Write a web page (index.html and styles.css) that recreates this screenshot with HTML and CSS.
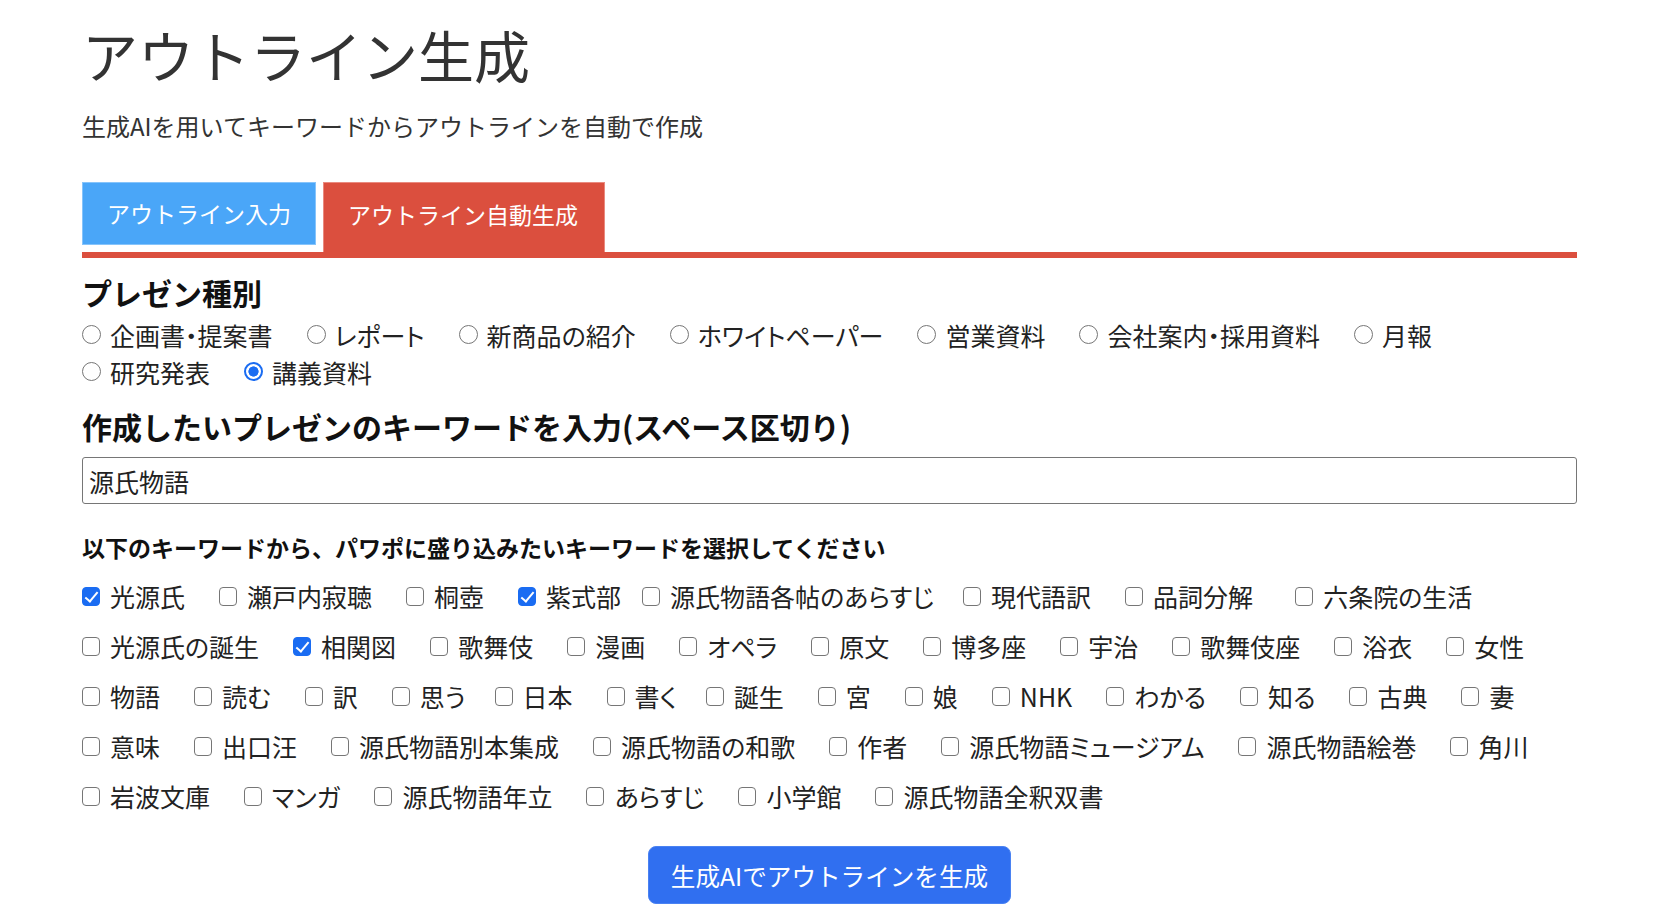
FILE: index.html
```html
<!DOCTYPE html>
<html lang="ja">
<head>
<meta charset="utf-8">
<title>アウトライン生成</title>
<link rel="stylesheet" href="styles.css">
</head>
<body>
<div class="page">
  <h1 class="title">アウトライン生成</h1>
  <p class="lead">生成AIを用いてキーワードからアウトラインを自動で作成</p>

  <div class="tabs">
    <button class="tab tab-input">アウトライン入力</button>
    <button class="tab tab-auto">アウトライン自動生成</button>
  </div>

  <section class="panel">
    <h2 class="sec-title">プレゼン種別</h2>
    <div class="radios">
      <label class="opt"><input type="radio" name="kind">企画書・提案書</label>
      <label class="opt"><input type="radio" name="kind">レポート</label>
      <label class="opt"><input type="radio" name="kind">新商品の紹介</label>
      <label class="opt"><input type="radio" name="kind">ホワイトペーパー</label>
      <label class="opt"><input type="radio" name="kind">営業資料</label>
      <label class="opt"><input type="radio" name="kind">会社案内・採用資料</label>
      <label class="opt"><input type="radio" name="kind">月報</label>
      <label class="opt"><input type="radio" name="kind">研究発表</label>
      <label class="opt"><input type="radio" name="kind" checked>講義資料</label>
    </div>

    <h2 class="sec-title sec-title-kw">作成したいプレゼンのキーワードを入力(スペース区切り)</h2>
    <input class="kw-input" type="text" value="源氏物語">

    <p class="pick-label">以下のキーワードから、パワポに盛り込みたいキーワードを選択してください</p>
    <div class="checks">
      <label class="opt"><input type="checkbox" checked>光源氏</label>
      <label class="opt"><input type="checkbox">瀬戸内寂聴</label>
      <label class="opt"><input type="checkbox">桐壺</label>
      <label class="opt opt-tight"><input type="checkbox" checked>紫式部</label>
      <label class="opt opt-snug"><input type="checkbox">源氏物語各帖のあらすじ</label>
      <label class="opt"><input type="checkbox">現代語訳</label>
      <label class="opt opt-wide"><input type="checkbox">品詞分解</label>
      <label class="opt"><input type="checkbox">六条院の生活</label>
      <label class="opt"><input type="checkbox">光源氏の誕生</label>
      <label class="opt"><input type="checkbox" checked>相関図</label>
      <label class="opt"><input type="checkbox">歌舞伎</label>
      <label class="opt"><input type="checkbox">漫画</label>
      <label class="opt"><input type="checkbox">オペラ</label>
      <label class="opt"><input type="checkbox">原文</label>
      <label class="opt"><input type="checkbox">博多座</label>
      <label class="opt"><input type="checkbox">宇治</label>
      <label class="opt"><input type="checkbox">歌舞伎座</label>
      <label class="opt"><input type="checkbox">浴衣</label>
      <label class="opt"><input type="checkbox">女性</label>
      <label class="opt"><input type="checkbox">物語</label>
      <label class="opt"><input type="checkbox">読む</label>
      <label class="opt"><input type="checkbox">訳</label>
      <label class="opt opt-snug"><input type="checkbox">思う</label>
      <label class="opt"><input type="checkbox">日本</label>
      <label class="opt opt-snug"><input type="checkbox">書く</label>
      <label class="opt"><input type="checkbox">誕生</label>
      <label class="opt"><input type="checkbox">宮</label>
      <label class="opt"><input type="checkbox">娘</label>
      <label class="opt"><input type="checkbox">NHK</label>
      <label class="opt"><input type="checkbox">わかる</label>
      <label class="opt"><input type="checkbox">知る</label>
      <label class="opt"><input type="checkbox">古典</label>
      <label class="opt"><input type="checkbox">妻</label>
      <label class="opt"><input type="checkbox">意味</label>
      <label class="opt"><input type="checkbox">出口汪</label>
      <label class="opt"><input type="checkbox">源氏物語別本集成</label>
      <label class="opt"><input type="checkbox">源氏物語の和歌</label>
      <label class="opt"><input type="checkbox">作者</label>
      <label class="opt"><input type="checkbox">源氏物語ミュージアム</label>
      <label class="opt"><input type="checkbox">源氏物語絵巻</label>
      <label class="opt"><input type="checkbox">角川</label>
      <label class="opt"><input type="checkbox">岩波文庫</label>
      <label class="opt"><input type="checkbox">マンガ</label>
      <label class="opt"><input type="checkbox">源氏物語年立</label>
      <label class="opt"><input type="checkbox">あらすじ</label>
      <label class="opt"><input type="checkbox">小学館</label>
      <label class="opt"><input type="checkbox">源氏物語全釈双書</label>
    </div>

    <div class="actions">
      <button class="gen-btn">生成AIでアウトラインを生成</button>
    </div>
  </section>
</div>
</body>
</html>
```

FILE: styles.css
```css
* {
  box-sizing: border-box;
}

html, body {
  margin: 0;
  padding: 0;
  background: #ffffff;
}

body {
  font-family: "Noto Sans CJK JP", "Noto Sans", sans-serif;
  color: #222222;
}

.page {
  width: 1495px;
  margin-left: 82px;
  padding-top: 20px;
}

.title {
  margin: 0;
  font-size: 56px;
  line-height: 68px;
  font-weight: 400;
  color: #333333;
}

.lead {
  margin: 21px 0 0;
  font-size: 24px;
  line-height: 34px;
  color: #333333;
}

.tabs {
  display: flex;
  align-items: flex-start;
  gap: 7px;
  margin-top: 39px;
  border-bottom: 6px solid #db4f3e;
}

.tab {
  font-family: inherit;
  font-size: 23px;
  color: #ffffff;
  padding: 0 24px;
  margin: 0;
  line-height: 61px;
  cursor: pointer;
}

.tab-input {
  height: 63px;
  background: #4aa6f8;
  border: 1px solid #86c4fb;
  margin-bottom: 7px;
}

.tab-auto {
  height: 70px;
  padding-right: 26px;
  background: #db4f3e;
  border: 1px solid #ea8a7f;
  border-bottom: none;
  padding-bottom: 7px;
}

.sec-title {
  margin: 14px 0 0;
  font-size: 30px;
  line-height: 40px;
  font-weight: 700;
  color: #111111;
}

.sec-title-kw {
  margin-top: 16px;
}

.radios,
.checks {
  display: flex;
  flex-wrap: wrap;
}

.radios {
  margin-top: 4px;
  column-gap: 34px;
}

.radios .opt {
  height: 37px;
}

.checks {
  margin-top: 8px;
  column-gap: 34px;
}

.checks .opt {
  height: 50px;
}

.checks .opt-tight {
  margin-right: -13px;
}

.checks .opt-snug {
  margin-right: -5px;
}

.checks .opt-wide {
  margin-right: 8px;
}

.opt {
  display: inline-flex;
  align-items: center;
  font-size: 25px;
  font-feature-settings: "palt";
  color: #222222;
  white-space: nowrap;
}

.opt input {
  -webkit-appearance: none;
  appearance: none;
  position: relative;
  flex: none;
  margin: 0 10px 0 0;
  background: #ffffff;
  border: 1px solid #767676;
}

.opt input[type="checkbox"] {
  width: 18px;
  height: 19px;
  border-radius: 4px;
}

.opt input[type="checkbox"]:checked {
  background: #1a6cf2;
  border-color: #1a6cf2;
}

.opt input[type="checkbox"]:checked::after {
  content: "";
  position: absolute;
  left: 5px;
  top: 1px;
  width: 5px;
  height: 11px;
  border: solid #ffffff;
  border-width: 0 2.5px 2.5px 0;
  transform: rotate(40deg);
}

.opt input[type="radio"] {
  width: 19px;
  height: 19px;
  border-radius: 50%;
  margin-right: 9px;
}

.opt input[type="radio"]:checked {
  border: 2px solid #1a6cf2;
  background: radial-gradient(circle, #1a6cf2 0 4.8px, #ffffff 5.4px);
}

.kw-input {
  display: block;
  width: 100%;
  height: 47px;
  margin-top: 11px;
  padding: 0 6px;
  font-family: inherit;
  font-size: 25px;
  color: #222222;
  border: 1px solid #767676;
  border-radius: 3px;
  background: #ffffff;
}

.pick-label {
  margin: 27px 0 0;
  font-size: 23px;
  line-height: 32px;
  font-weight: 700;
  color: #111111;
}

.actions {
  display: flex;
  justify-content: center;
  margin-top: 25px;
}

.gen-btn {
  height: 58px;
  padding: 0 22px;
  font-family: inherit;
  font-size: 24.6px;
  color: #ffffff;
  background: #306ff0;
  border: 1px solid #4a82f2;
  border-radius: 8px;
  cursor: pointer;
}
```
